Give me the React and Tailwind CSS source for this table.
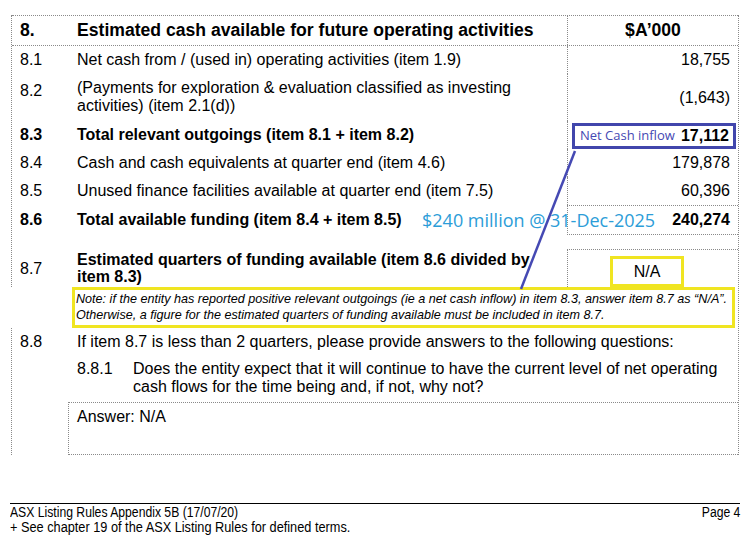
import React from 'react';

const dot = 'border-dotted border-[#8a8a8a]';

const Row = ({ num, bold, children, value, h, valueClass = '', labelClass = 'items-center', numClass = 'items-center' }) => (
  <div className={`flex ${h}`}>
    <div className={`w-[65px] pl-[8px] flex ${numClass} ${bold ? 'font-bold' : ''}`}>{num}</div>
    <div className={`flex-1 flex ${labelClass} leading-[18px] ${bold ? 'font-bold' : ''}`}>{children}</div>
    <div className={`w-[171px] border-l ${dot} flex items-center justify-end pr-[8px] ${valueClass}`}>{value}</div>
  </div>
);

export default function App() {
  return (
    <div className="relative w-[750px] h-[545px] bg-white text-black text-[16px] font-['Liberation_Sans',Arial,sans-serif] overflow-hidden">
      <div className={`ml-[11px] mt-[15px] w-[728px] border-r ${dot}`}>
        {/* Section 8.0 - 8.7 */}
        <div className={`border-l ${dot}`}>
          <div className={`flex h-[31px] border-y ${dot} font-bold text-[17.6px]`}>
            <div className="w-[65px] pl-[8px] flex items-center">8.</div>
            <div className="flex-1 flex items-center">Estimated cash available for future operating activities</div>
            <div className={`w-[171px] border-l ${dot} flex items-center justify-center`}>$A’000</div>
          </div>

          <Row num="8.1" h="h-[28px]" value="18,755">Net cash from / (used in) operating activities (item 1.9)</Row>
          <Row num="8.2" h="h-[47px]" labelClass="items-start pt-[5px]" numClass="items-start pt-[5px]" value="(1,643)">
            (Payments for exploration &amp; evaluation classified as investing activities) (item 2.1(d))
          </Row>

          {/* 8.3 with highlight box */}
          <div className="flex h-[28px]">
            <div className="w-[65px] pl-[8px] flex items-center font-bold">8.3</div>
            <div className="flex-1 flex items-center font-bold">Total relevant outgoings (item 8.1 + item 8.2)</div>
            <div className={`w-[171px] border-l ${dot} flex items-end pl-[4px] pr-[2px]`}>
              <div className="flex-1 h-[26px] border-[3px] border-[#4146ac] flex items-center justify-between pl-[5px] pr-[4px]">
                <span className="text-[13px] text-[#4549b3] font-['Open_Sans',sans-serif]">Net Cash inflow</span>
                <span className="font-bold">17,112</span>
              </div>
            </div>
          </div>

          <Row num="8.4" h="h-[28px]" value="179,878">Cash and cash equivalents at quarter end (item 4.6)</Row>
          <Row num="8.5" h="h-[28px]" value="60,396">Unused finance facilities available at quarter end (item 7.5)</Row>

          <div className="flex h-[30px]">
            <div className="w-[65px] pl-[8px] flex items-center font-bold">8.6</div>
            <div className="flex-1 flex items-center font-bold">Total available funding (item 8.4 + item 8.5)</div>
            <div className={`w-[171px] border-l border-y ${dot} flex items-center justify-end pr-[8px] font-bold`}>240,274</div>
          </div>

          <div className="h-[14px]" />

          <div className="flex h-[38px]">
            <div className="w-[65px] pl-[8px] flex items-center pt-[2px]">8.7</div>
            <div className="flex-1 pt-[2px] pr-[30px] font-bold leading-[17px]">
              Estimated quarters of funding available (item 8.6 divided by item 8.3)
            </div>
            <div className={`w-[171px] border-l border-t ${dot} flex items-end pl-[42px]`}>
              <div className="w-[74px] h-[31px] border-[3px] border-[#f0e521] flex items-center justify-center">N/A</div>
            </div>
          </div>
        </div>

        {/* Note */}
        <div className="ml-[61px] mr-[3px] h-[41px] border-[3px] border-[#f0e521] pl-[1px] pt-[1px] text-[12.6px] italic leading-[16px]">
          <p>Note: if the entity has reported positive relevant outgoings (ie a net cash inflow) in item 8.3, answer item 8.7 as “N/A”.</p>
          <p>Otherwise, a figure for the estimated quarters of funding available must be included in item 8.7.</p>
        </div>

        {/* Section 8.8 */}
        <div className={`border-l ${dot}`}>
          <div className="flex h-[27px] items-center">
            <div className="w-[65px] pl-[8px]">8.8</div>
            <div className="flex-1">If item 8.7 is less than 2 quarters, please provide answers to the following questions:</div>
          </div>
          <div className="flex h-[47px] pt-[5px] leading-[18px]">
            <div className="w-[65px]" />
            <div className="w-[56px]">8.8.1</div>
            <div className="flex-1 pr-[20px]">
              Does the entity expect that it will continue to have the current level of net operating cash flows for the time being and, if not, why not?
            </div>
          </div>
          <div className={`ml-[56px] h-[53px] border-l border-y ${dot} pl-[8px] pt-[5px] leading-[18px]`}>
            Answer: N/A
          </div>
        </div>
      </div>

      {/* Footer */}
      <div className="ml-[10px] mt-[48px] w-[730px] border-t border-black pt-[1px] text-[14px] leading-[15px]">
        <div className="flex justify-between">
          <span className="inline-block scale-x-[0.87] origin-left whitespace-nowrap">ASX Listing Rules Appendix 5B (17/07/20)</span>
          <span className="inline-block scale-x-[0.87] origin-right">Page 4</span>
        </div>
        <div className="scale-x-[0.91] origin-left whitespace-nowrap">+ See chapter 19 of the ASX Listing Rules for defined terms.</div>
      </div>

      {/* Annotations */}
      <div className="absolute left-[422px] top-[207px] text-[18px] leading-[26px] text-[#2c9dd8] font-['Open_Sans',sans-serif] whitespace-nowrap">
        $240 million @ 31-Dec-2025
      </div>
      <svg className="absolute left-0 top-0 pointer-events-none" width="750" height="545">
        <line x1="575" y1="151" x2="521" y2="289" stroke="#4549b3" strokeWidth="2.5" />
      </svg>
    </div>
  );
}
